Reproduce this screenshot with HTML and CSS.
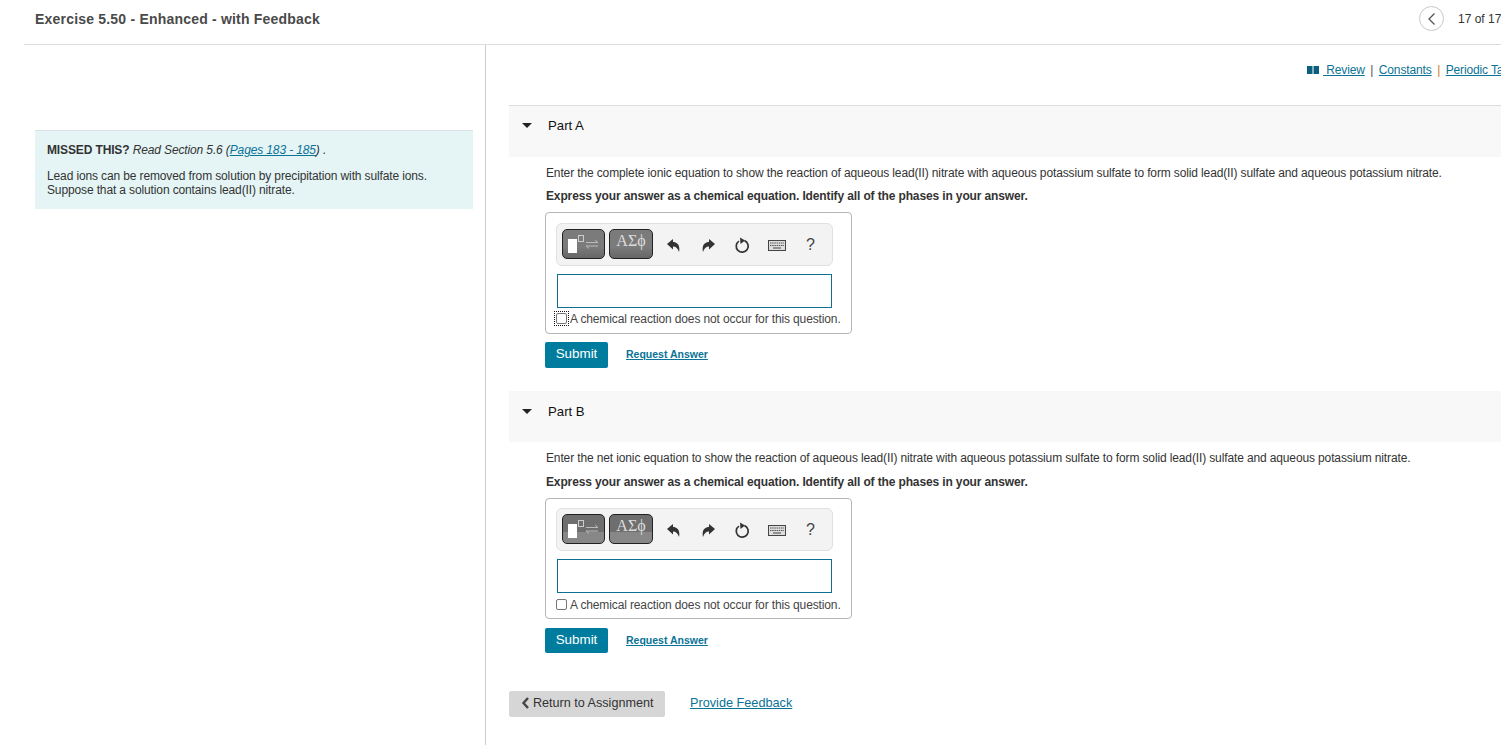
FILE: index.html
```html
<!DOCTYPE html>
<html lang="en">
<head>
<meta charset="utf-8">
<title>Exercise 5.50</title>
<link rel="stylesheet" href="styles.css">
</head>
<body>
<div class="page">
  <header class="topbar">
    <h1 class="title">Exercise 5.50 - Enhanced - with Feedback</h1>
    <div class="pager">
      <span class="prev"><svg width="9" height="14" viewBox="0 0 9 14"><path d="M7.500 1.500 2 7l5.500 5.500" fill="none" stroke="#555" stroke-width="1.300"/></svg></span>
      <span class="count">17 of 17</span>
    </div>
  </header>
  <div class="columns">
    <aside class="left">
      <div class="info">
        <p class="missed"><b class="missed-label">MISSED THIS?</b> <i>Read Section 5.6 (<a href="#">Pages 183 - 185</a>) .</i></p>
        <p class="intro">Lead ions can be removed from solution by precipitation with sulfate ions.<br>Suppose that a solution contains lead(II) nitrate.</p>
      </div>
    </aside>
    <main class="right">
      <nav class="links">
        <svg class="book" width="12" height="8" viewBox="0 0 12 8"><path d="M0 0h5.500v8H0zM6.500 0H12v8H6.500z" fill="#0b5e7c"/></svg>
        <a href="#">&nbsp;Review</a><span class="sep">|</span><a href="#">Constants</a><span class="sep sep-alt">|</span><a href="#">Periodic Table</a>
      </nav>

      <section class="part part-a">
        <div class="part-head"><span class="caret"></span><span class="part-name">Part A</span></div>
        <div class="part-body">
          <p class="prompt">Enter the complete ionic equation to show the reaction of aqueous lead(II) nitrate with aqueous potassium sulfate to form solid lead(II) sulfate and aqueous potassium nitrate.</p>
          <p class="express">Express your answer as a chemical equation. Identify all of the phases in your answer.</p>
          <div class="answer">
            <div class="toolbar">
              <span class="tpl tpl-a"><svg width="41" height="28" viewBox="0 0 41 28"><rect x="5" y="9" width="9" height="14" fill="#fff"/><rect x="15.500" y="5.500" width="5" height="6" fill="none" stroke="#ccc"/><path d="M23 12.500h12l-3-2.500M35 16H23l3 2.500" fill="none" stroke="#bbb"/></svg></span>
              <span class="tpl tpl-b">ΑΣϕ</span>
              <span class="tools">
                <svg class="tool" width="13" height="13" viewBox="0 0 13 13"><path d="M0 5 6 0V3C10 3 13.500 6 12 13 11 9.500 9 7.500 6 7.500V10.500Z" fill="#333"/></svg>
                <svg class="tool" width="13" height="13" viewBox="0 0 13 13"><path d="M13 5 7 0V3C3 3-.5 6 1 13 2 9.500 4 7.500 7 7.500V10.500Z" fill="#333"/></svg>
                <svg class="tool" width="17" height="17" viewBox="0 0 17 17"><path d="M10.500 3.600A6 6 0 1 1 5 4.100" fill="none" stroke="#333" stroke-width="1.700"/><path d="M6 .5 11 3.600 6.500 7z" fill="#333"/></svg>
                <svg class="tool" width="18" height="11" viewBox="0 0 18 11"><rect x=".5" y=".5" width="17" height="10" fill="#ddd" stroke="#444"/><path d="M2 3h14M2 5.500h14" stroke="#555" stroke-dasharray="1.500 .7"/><path d="M5 8h8" stroke="#444"/></svg>
                <span class="help">?</span>
              </span>
            </div>
            <div class="input"></div>
            <label class="noreact"><span class="check focused"><span class="box"></span></span><span>A chemical reaction does not occur for this question.</span></label>
          </div>
          <div class="actions"><a class="submit" href="#">Submit</a><a class="request" href="#">Request Answer</a></div>
        </div>
      </section>

      <section class="part part-b">
        <div class="part-head"><span class="caret"></span><span class="part-name">Part B</span></div>
        <div class="part-body">
          <p class="prompt">Enter the net ionic equation to show the reaction of aqueous lead(II) nitrate with aqueous potassium sulfate to form solid lead(II) sulfate and aqueous potassium nitrate.</p>
          <p class="express">Express your answer as a chemical equation. Identify all of the phases in your answer.</p>
          <div class="answer">
            <div class="toolbar">
              <span class="tpl tpl-a"><svg width="41" height="28" viewBox="0 0 41 28"><rect x="5" y="9" width="9" height="14" fill="#fff"/><rect x="15.500" y="5.500" width="5" height="6" fill="none" stroke="#ccc"/><path d="M23 12.500h12l-3-2.500M35 16H23l3 2.500" fill="none" stroke="#bbb"/></svg></span>
              <span class="tpl tpl-b">ΑΣϕ</span>
              <span class="tools">
                <svg class="tool" width="13" height="13" viewBox="0 0 13 13"><path d="M0 5 6 0V3C10 3 13.500 6 12 13 11 9.500 9 7.500 6 7.500V10.500Z" fill="#333"/></svg>
                <svg class="tool" width="13" height="13" viewBox="0 0 13 13"><path d="M13 5 7 0V3C3 3-.5 6 1 13 2 9.500 4 7.500 7 7.500V10.500Z" fill="#333"/></svg>
                <svg class="tool" width="17" height="17" viewBox="0 0 17 17"><path d="M10.500 3.600A6 6 0 1 1 5 4.100" fill="none" stroke="#333" stroke-width="1.700"/><path d="M6 .5 11 3.600 6.500 7z" fill="#333"/></svg>
                <svg class="tool" width="18" height="11" viewBox="0 0 18 11"><rect x=".5" y=".5" width="17" height="10" fill="#ddd" stroke="#444"/><path d="M2 3h14M2 5.500h14" stroke="#555" stroke-dasharray="1.500 .7"/><path d="M5 8h8" stroke="#444"/></svg>
                <span class="help">?</span>
              </span>
            </div>
            <div class="input"></div>
            <label class="noreact"><span class="check"><span class="box"></span></span><span>A chemical reaction does not occur for this question.</span></label>
          </div>
          <div class="actions"><a class="submit" href="#">Submit</a><a class="request" href="#">Request Answer</a></div>
        </div>
      </section>

      <div class="footer">
        <a class="return" href="#"><svg width="9" height="12" viewBox="0 0 9 12"><path d="M7 1 2.500 6 7 11" fill="none" stroke="#444" stroke-width="2.400"/></svg>Return to Assignment</a>
        <a class="feedback" href="#">Provide Feedback</a>
      </div>
    </main>
  </div>
</div>
</body>
</html>
```

FILE: styles.css
```css
* { box-sizing: border-box; }
html, body { margin: 0; padding: 0; height: 100%; overflow: hidden; background: #fff; }
body { font-family: "Liberation Sans", Arial, sans-serif; font-size: 12px; letter-spacing: -.13px; color: #333; }
a { color: #0a7396; }
p { margin: 0; }
.page { width: 1501px; height: 745px; overflow: hidden; display: flex; flex-direction: column; }
.topbar { flex: none; height: 45px; margin-left: 24px; padding-left: 11px; border-bottom: 1px solid #ddd; display: flex; justify-content: space-between; align-items: center; }
.title { margin: 0 0 6px; font-size: 14px; font-weight: 700; color: #4a4a4a; letter-spacing: .2px; }
.pager { display: flex; align-items: center; margin-bottom: 7px; }
.prev { width: 25px; height: 25px; border: 1px solid #c8c8c8; border-radius: 50%; display: flex; align-items: center; justify-content: center; }
.count { margin-left: 14px; width: 43px; white-space: nowrap; letter-spacing: 0; color: #333; }
.columns { flex: 1; display: flex; min-height: 0; }
.left { flex: none; width: 486px; padding: 85px 12px 0 35px; border-right: 1px solid #c8ced6; }
.info { height: 79px; background: #e5f5f6; border-top: 1px solid #d9e2e6; padding: 12px 11px 0 12px; line-height: 14px; }
.missed { margin-bottom: 12px; }
.right { flex: none; width: 1033px; padding: 0 0 0 23px; }
.links { height: 60px; padding-top: 18px; display: flex; justify-content: flex-end; align-items: flex-start; line-height: 14px; }
.book { margin: 3px 4px 0 0; }
.sep { margin: 0 5.500px; color: #555; }
.sep-alt { color: #c77b1e; }
.part-head { height: 52px; background: #f8f8f8; padding: 12px 0 0 13px; display: flex; align-items: flex-start; color: #222; }
.part-a .part-head { border-top: 1px solid #ddd; }
.part-b .part-head { height: 51px; padding-top: 13px; }
.caret { width: 0; height: 0; margin-top: 5px; border-left: 5px solid transparent; border-right: 5px solid transparent; border-top: 5px solid #222; }
.part-name { margin-left: 16px; font-size: 13.200px; line-height: 16px; letter-spacing: 0; color: #111; }
.part-body { padding: 9px 0 0 37px; }
.prompt { line-height: 14px; }
.express { margin-top: 9px; font-weight: 700; line-height: 14px; color: #333; }
.part-b .express { margin-top: 10px; }
.answer { width: 307px; height: 122px; margin: 9px 0 0 -1px; border: 1px solid #b5b5b5; border-radius: 4px; padding: 10px 0 0 11px; }
.part-b .answer { height: 121px; padding-top: 9px; }
.toolbar { width: 277px; height: 43px; margin-left: -1px; background: #f3f3f3; border: 1px solid #e0e0e0; border-radius: 6px; display: flex; align-items: center; padding: 0 0 2px 5px; }
.tpl { height: 30px; border: 1px solid #222; border-radius: 5px; background: linear-gradient(#7b7b7b 0 60%, #666 100%); display: flex; align-items: center; justify-content: center; color: #ddd; }
.part-b .tpl { background: linear-gradient(#6e6e6e 0 60%, #878787 60%); }
.tpl-a { width: 43px; margin-right: 4px; }
.tpl-b { width: 44px; font-family: "Liberation Serif", "DejaVu Serif", serif; font-size: 16px; letter-spacing: 0; padding-bottom: 5px; }
.tools { flex: 1; display: flex; align-items: center; padding: 3px 0 0 14px; }
.tool { flex: none; }
.tool:nth-child(1) { margin-right: 22px; }
.tool:nth-child(2) { margin-right: 19px; }
.tool:nth-child(3) { margin-right: 17px; }
.help { margin-left: 20px; font-size: 16px; letter-spacing: 0; color: #444; }
.input { width: 275px; height: 34px; margin-top: 8px; background: #fff; border: 1px solid #0f6f8f; }
.noreact { display: flex; align-items: center; height: 21px; margin-left: -3px; color: #444; white-space: nowrap; }
.part-b .noreact { height: 23px; }
.check { width: 15px; height: 15px; display: flex; align-items: center; justify-content: center; border: 1px dotted transparent; margin-right: 1px; }
.check.focused { border-color: #111; }
.box { width: 11px; height: 11px; background: #fff; border: 1px solid #767676; border-radius: 2px; }
.actions { display: flex; align-items: flex-start; margin: 8px 0 0 -1px; height: 26px; }
.part-b .actions { margin-top: 9px; height: 25px; }
.submit { width: 63px; height: 26px; background: #007c9e; color: #fff; border-radius: 2px; text-decoration: none; font-size: 13.400px; letter-spacing: 0; text-align: center; line-height: 23px; }
.part-b .submit { height: 25px; }
.request { margin: 6px 0 0 18px; font-size: 10.500px; letter-spacing: 0; font-weight: 700; }
.part-b { margin-top: 23px; }
.footer { margin-top: 38px; display: flex; align-items: flex-start; }
.return { width: 156px; height: 26px; background: #d6d6d6; border-radius: 2px; color: #333; text-decoration: none; display: flex; align-items: center; padding: 0 0 2px 12px; gap: 3px; font-size: 12.600px; letter-spacing: 0; }
.feedback { margin: 5px 0 0 25px; font-size: 12.700px; letter-spacing: 0; }
```
